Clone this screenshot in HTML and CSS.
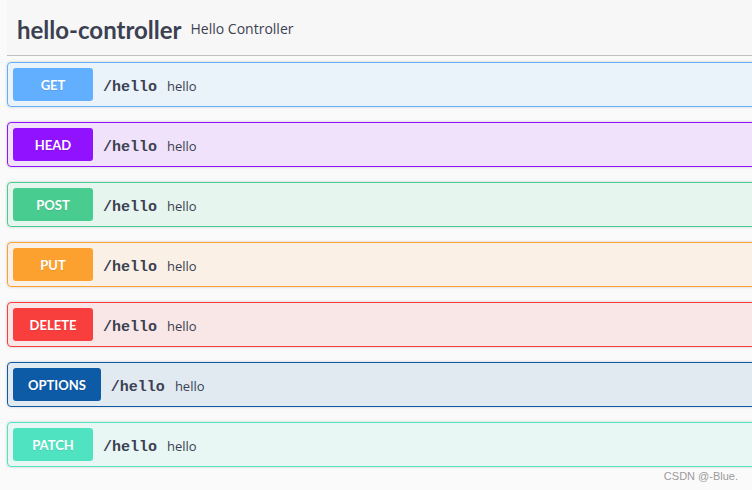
FILE: index.html
```html
<!DOCTYPE html>
<html>
<head>
<meta charset="utf-8">
<link rel="stylesheet" href="styles.css">
</head>
<body>
<div class="tag-section">
  <h3 class="tag-header">
    <span class="tag-name">hello-controller</span>
    <small class="tag-desc">Hello Controller</small>
  </h3>
  <div class="opblock get">
    <span class="method">GET</span>
    <div class="summary"><span class="path">/hello</span><span class="desc">hello</span></div>
  </div>
  <div class="opblock head">
    <span class="method">HEAD</span>
    <div class="summary"><span class="path">/hello</span><span class="desc">hello</span></div>
  </div>
  <div class="opblock post">
    <span class="method">POST</span>
    <div class="summary"><span class="path">/hello</span><span class="desc">hello</span></div>
  </div>
  <div class="opblock put">
    <span class="method">PUT</span>
    <div class="summary"><span class="path">/hello</span><span class="desc">hello</span></div>
  </div>
  <div class="opblock delete">
    <span class="method">DELETE</span>
    <div class="summary"><span class="path">/hello</span><span class="desc">hello</span></div>
  </div>
  <div class="opblock options">
    <span class="method">OPTIONS</span>
    <div class="summary"><span class="path">/hello</span><span class="desc">hello</span></div>
  </div>
  <div class="opblock patch">
    <span class="method">PATCH</span>
    <div class="summary"><span class="path">/hello</span><span class="desc">hello</span></div>
  </div>
</div>
<div class="watermark">CSDN @-Blue.</div>
</body>
</html>
```

FILE: styles.css
```css
html, body {
  margin: 0;
  padding: 0;
  height: 100%;
}
body {
  background: #fafafa;
  overflow: hidden;
  position: relative;
  font-family: "Open Sans", "Liberation Sans", sans-serif;
  color: #3b4151;
}
.tag-section {
  padding-left: 7px;
  margin-right: -40px;
}
.tag-header {
  display: flex;
  align-items: center;
  height: 55px;
  margin: 0 0 6px 0;
  padding: 0 0 0 10px;
  border-bottom: 1px solid rgba(59, 65, 81, 0.3);
  background: #f7f7f7;
}
.tag-name {
  font-family: Lato, "Open Sans", sans-serif;
  font-weight: 700;
  font-size: 24px;
  color: #3b4151;
  padding-top: 3px;
}
.tag-desc {
  font-family: "Open Sans", sans-serif;
  font-weight: 400;
  font-size: 14px;
  color: #3b4151;
  margin-left: 9px;
  padding-top: 1px;
}
.opblock {
  display: flex;
  align-items: center;
  height: 33px;
  padding: 5px;
  margin-bottom: 15px;
  border: 1px solid;
  border-radius: 4px;
  box-shadow: 0 0 3px rgba(0, 0, 0, 0.19);
}
.method {
  display: flex;
  align-items: center;
  justify-content: center;
  box-sizing: border-box;
  min-width: 80px;
  height: 33px;
  padding: 0 15px;
  border-radius: 3px;
  color: #fff;
  font-family: Lato, "Open Sans", sans-serif;
  font-weight: 700;
  font-size: 13px;
  text-shadow: 0 1px 0 rgba(0, 0, 0, 0.1);
}
.summary {
  display: flex;
  align-items: baseline;
  padding-top: 4px;
}
.path {
  padding: 0 10px;
  font-family: "Liberation Mono", monospace;
  font-weight: 700;
  font-size: 15px;
  color: #3b4151;
}
.desc {
  font-family: "Open Sans", sans-serif;
  font-size: 13px;
  color: #3b4151;
}
.get { border-color: #61affe; background: rgba(97, 175, 254, 0.1); }
.get .method { background: #61affe; }
.head { border-color: #9012fe; background: rgba(144, 18, 254, 0.1); }
.head .method { background: #9012fe; }
.post { border-color: #49cc90; background: rgba(73, 204, 144, 0.1); }
.post .method { background: #49cc90; }
.put { border-color: #fca130; background: rgba(252, 161, 48, 0.1); }
.put .method { background: #fca130; }
.delete { border-color: #f93e3e; background: rgba(249, 62, 62, 0.1); }
.delete .method { background: #f93e3e; }
.options { border-color: #0d5aa7; background: rgba(13, 90, 167, 0.1); }
.options .method { background: #0d5aa7; }
.patch { border-color: #50e3c2; background: rgba(80, 227, 194, 0.1); }
.patch .method { background: #50e3c2; }
.watermark {
  position: absolute;
  right: 14px;
  bottom: 8px;
  font-family: "Liberation Sans", sans-serif;
  font-size: 11px;
  color: #9a9a9a;
}
```
